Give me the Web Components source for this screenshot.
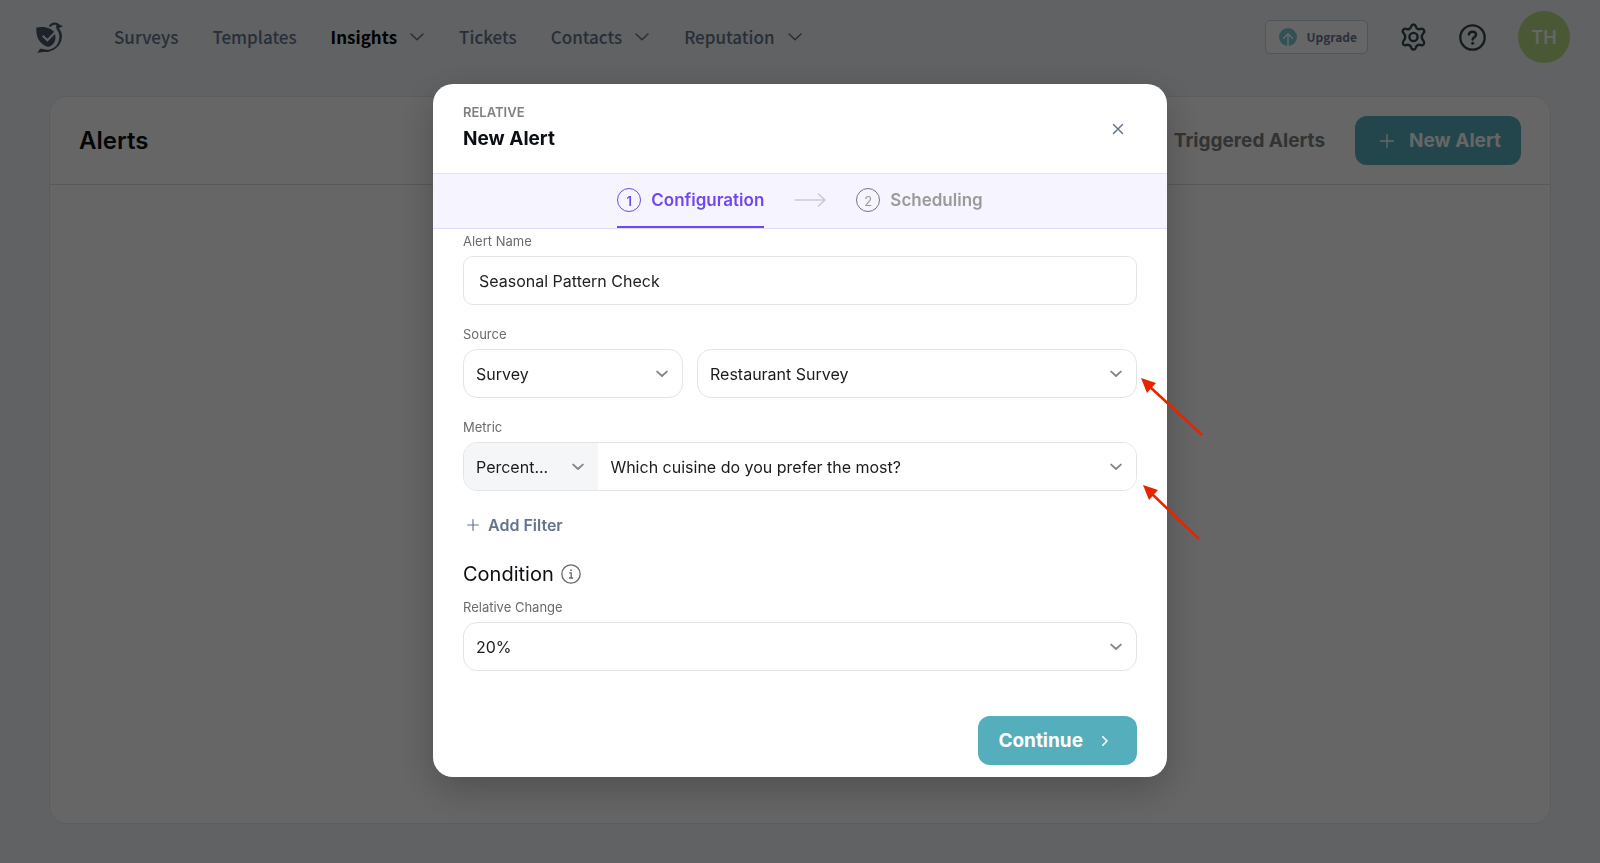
<!DOCTYPE html>
<html lang="en">
<head>
<meta charset="utf-8">
<meta name="viewport" content="width=device-width, initial-scale=1">
<title>Alerts</title>
<style>
  html, body { height: 100%; margin: 0; }
  body {
    background: #f1f5f9;
    color: #0b0f14;
    font-family: Inter, "Liberation Sans", sans-serif;
    font-size: 16px;
    --teal: #55aebb;
    --line: #e2e4e6;
    --violet: #7048f0;
    --slate: #64748b;
  }
</style>
</head>
<body>
<app-page>
  <top-nav slot="nav">
    <nav-item>Surveys</nav-item>
    <nav-item>Templates</nav-item>
    <nav-item menu current>Insights</nav-item>
    <nav-item>Tickets</nav-item>
    <nav-item menu>Contacts</nav-item>
    <nav-item menu>Reputation</nav-item>
  </top-nav>
  <page-card>
    <span slot="title">Alerts</span>
    <text-link slot="actions">Triggered Alerts</text-link>
    <app-button slot="actions" icon="plus">New Alert</app-button>
  </page-card>
  <alert-modal slot="modal"></alert-modal>
</app-page>

<script>
const icons = {
  plus: `<svg width="24" height="24" viewBox="0 0 24 24" fill="none" stroke="currentColor" stroke-width="1.4" stroke-linecap="round" aria-hidden="true"><path d="M12 5.5v13M5.5 12h13"/></svg>`,
  next: `<svg width="24" height="24" viewBox="0 0 24 24" fill="none" stroke="currentColor" stroke-width="1.6" stroke-linecap="round" stroke-linejoin="round" aria-hidden="true"><path d="M9.8 7.8 14 12l-4.2 4.2"/></svg>`,
  chevron: `<svg width="12" height="8" viewBox="0 0 12 8" fill="none" stroke="#868686" stroke-width="1.9" stroke-linecap="round" stroke-linejoin="round" aria-hidden="true"><path d="M1.2 1.6 6 6l4.800-4.400"/></svg>`,
};

function define(name, render) {
  customElements.define(name, class extends HTMLElement {
    constructor() {
      super();
      this.attachShadow({ mode: 'open' });
    }
    connectedCallback() {
      if (this.shadowRoot.childNodes.length) return;
      const t = document.createElement('template');
      t.innerHTML = `<style>*{box-sizing:border-box}</style>` + render(this);
      this.shadowRoot.append(t.content.cloneNode(true));
    }
  });
}

define('app-page', () => `
  <style>
    :host { display: flex; flex-direction: column; min-height: 100vh; box-sizing: border-box; padding-bottom: 39px; }
    main { flex: 1; display: flex; padding: 0 49px; }
    ::slotted(page-card) { flex: 1; }
  </style>
  <slot name="nav"></slot>
  <main><slot></slot></main>
  <slot name="modal"></slot>`);

define('top-nav', () => `
  <style>
    :host { display: flex; align-items: center; height: 74px; margin-bottom: 22px; padding: 0 30px 0 36px;
      font-family: "Noto Sans CJK SC", "Noto Sans", sans-serif; box-sizing: border-box; }
    .logo { display: block; width: 27px; height: 31px; margin-right: 51px; color: #475569; }
    svg { display: block; }
    nav { display: flex; align-items: center; gap: 34px; }
    .tools { display: flex; align-items: center; gap: 32px; margin-left: auto; }
    button { font: inherit; border: 0; background: none; padding: 0; color: #33484d; }
    .upgrade { display: flex; align-items: center; gap: 9px; height: 34px; padding: 0 10px 0 13px;
      border: 1px solid #cbd2e0; border-radius: 5px; background: #fff; color: #6b7699; font-size: 12px; font-weight: 700; line-height: 20px; }
    .avatar { width: 52px; height: 52px; border-radius: 50%; background: #badb88; color: #fff; font: 600 18px Inter, sans-serif; }
  </style>
  <a class="logo" href="#" aria-label="Home">
    <svg width="27" height="31" viewBox="0 0 78 90" fill="none">
      <path fill="currentColor" d="M1 16C20 12 43 16 53 30 61 48 54 64 38 72 16 70-2 48 1 16Z"/>
      <path stroke="#f1f5f9" stroke-width="6" d="m19 40 14 13 26-27"/>
      <path stroke="currentColor" stroke-width="6" d="M39 13C46 3 59 2 66 10"/>
      <path fill="currentColor" d="M61 4 78 12 66 18C76 29 77 42 73 55 66 75 44 89 21 87L3 89C10 85 8 77 16 78 38 85 58 76 65 57 70 44 68 31 60 22L58 13Z"/>
    </svg>
  </a>
  <nav aria-label="Main"><slot></slot></nav>
  <div class="tools">
    <button class="upgrade" type="button">
      <svg width="18" height="18" viewBox="0 0 18 18" aria-hidden="true"><circle cx="9" cy="9" r="9" fill="#78cdd3"/><path d="M9 17.5V6.4M4.6 10.2 9 5.8l4.4 4.4" fill="none" stroke="#fff" stroke-width="1.6" stroke-linecap="round" stroke-linejoin="round"/></svg>
      Upgrade
    </button>
    <button type="button" aria-label="Settings">
      <svg width="27" height="28" viewBox="0 0 27 28" fill="none" stroke="currentColor" stroke-width="2.4" stroke-linejoin="round"><path d="M11.3 3.2C12 .9 15 .9 15.7 3.2 16.4 5.700 18.700 6.800 21 5.900 23.600 5.200 25.300 8 23.500 10 21.300 12.500 21.300 15.500 23.500 18 25.300 20 23.600 22.800 21 22.100 18.700 21.200 16.400 22.300 15.700 24.800 15 27.100 12 27.100 11.300 24.800 10.600 22.300 8.300 21.200 6 22.100 3.400 22.800 1.700 20 3.500 18 5.700 15.500 5.700 12.500 3.500 10 1.700 8 3.400 5.200 6 5.900 8.300 6.800 10.600 5.700 11.300 3.200Z"/><circle cx="13.500" cy="14" r="4.100"/></svg>
    </button>
    <button type="button" aria-label="Help">
      <svg width="27" height="27" viewBox="0 0 27 27" fill="none" stroke="currentColor" stroke-width="2.3" stroke-linecap="round"><circle cx="13.5" cy="13.5" r="12.2"/><path stroke-width="2.5" d="M9.900 10.400C10.500 6.500 17.100 6.900 17 10.700 17 13 14 13.200 13.700 15.400"/><circle cx="13.6" cy="19.3" r="1.5" fill="currentColor" stroke="none"/></svg>
    </button>
    <button class="avatar" type="button" aria-label="Account">TH</button>
  </div>`);

define('nav-item', el => `
  <style>
    :host { display: block; }
    a { display: flex; align-items: center; gap: 12px; color: var(--slate); font-size: 17px; font-weight: 500; line-height: 24px; text-decoration: none; }
    :host([current]) a { color: #000; font-weight: 700; }
    svg { display: block; }
  </style>
  <a href="#"><slot></slot>${el.hasAttribute('menu') ? `<svg width="16" height="10" viewBox="0 0 16 10" fill="none" stroke="#64748b" stroke-width="1.5" stroke-linecap="round" stroke-linejoin="round" aria-hidden="true"><path d="M2 2l6 5.800L14 2"/></svg>` : ''}</a>`);

define('page-card', () => `
  <style>
    :host { display: block; background: #fff; border: 1px solid #e2e8f0; border-radius: 18px; }
    header { display: flex; align-items: center; gap: 30px; min-height: 88px; padding: 0 29px; border-bottom: 1px solid #d9dde1; }
    h1 { margin: 0 auto 0 0; font-size: 24px; line-height: 32px; font-weight: 600; }
  </style>
  <header><h1><slot name="title"></slot></h1><slot name="actions"></slot></header>
  <slot></slot>`);

define('text-link', () => `
  <style>
    :host { display: block; }
    a { color: #808080; font-size: 19px; line-height: 24px; font-weight: 700; text-decoration: none; white-space: nowrap; }
  </style>
  <a href="#"><slot></slot></a>`);

define('app-button', el => {
  const icon = icons[el.getAttribute('icon')];
  const label = '<span><slot></slot></span>';
  return `
  <style>
    :host { display: block; }
    button { display: flex; align-items: center; gap: 10px; height: 49px; padding: 0 20px; border: 0; border-radius: 12px;
      background: var(--teal); color: #fff; font: inherit; font-size: 19px; font-weight: 700; line-height: 24px; white-space: nowrap; }
    svg { display: block; }
  </style>
  <button type="button">${el.getAttribute('icon') === 'next' ? label + icon : icon + label}</button>`;
});

define('step-item', el => `
  <style>
    :host { display: flex; align-items: center; gap: 10px; border-bottom: 2px solid transparent; color: #9a9a9a; font-size: 17px; line-height: 24px; font-weight: 600; }
    :host([active]) { border-color: var(--violet); color: var(--violet); }
    .num { display: grid; place-items: center; width: 24px; height: 24px; border: 1px solid #777; border-radius: 50%; font-size: 13px; font-weight: 400; }
    :host([active]) .num { border-color: currentColor; font-weight: 600; }
  </style>
  <span class="num">${el.getAttribute('number')}</span><slot></slot>`);

define('pointer-arrow', el => `
  <style>
    :host { display: block; position: absolute; left: 100%; pointer-events: none; }
    svg { display: block; }
  </style>
  <svg width="70" height="64" viewBox="0 0 70 64" aria-hidden="true">${el.hasAttribute('short')
    ? '<path d="m14 10 48 46" stroke="#e62400" stroke-width="2.5"/><path d="M6 2 21 7 12 17Z" fill="#e62400"/>'
    : '<path d="m12 10 53 49" stroke="#e62400" stroke-width="2.5"/><path d="M4 2 19 7 10 17Z" fill="#e62400"/>'}</svg>`);

const labelStyle = `label { display: block; margin-bottom: 5px; color: #6b6b6b; font-size: 13px; line-height: 20px; }`;

define('text-field', el => `
  <style>
    :host { display: block; }
    ${labelStyle}
    input { display: block; width: 100%; height: 49px; padding: 0 15px; border: 1px solid var(--line); border-radius: 10px; background: #fff;
      color: #222; font: inherit; font-size: 16px; outline: 0; }
  </style>
  <label for="control">${el.getAttribute('label')}</label>
  <input id="control" type="text" value="${el.getAttribute('value')}">`);

const selectBox = (id, text, aria) => `
  <span class="box"><select id="${id}"${aria ? ` aria-label="${aria}"` : ''}><option>${text}</option></select>${icons.chevron}</span>`;

define('select-field', el => {
  const values = el.getAttribute('values').split('|');
  return `
  <style>
    :host { display: block; position: relative; }
    ${labelStyle}
    .row { display: grid; gap: 14px; }
    .two { grid-template-columns: 1fr 2fr; }
    .box { display: grid; align-items: center; height: 49px; border: 1px solid var(--line); border-radius: 14px; background: #fff; min-width: 0; }
    select { grid-area: 1 / 1; width: 100%; height: 100%; padding: 0 32px 0 12px; border: 0; border-radius: inherit; background: none; appearance: none;
      color: #1b1b1b; font: inherit; font-size: 16px; outline: 0; }
    svg { grid-area: 1 / 1; justify-self: end; margin-right: 14px; pointer-events: none; }
    :host([joined]) .row { grid-template-columns: 1fr 4fr; gap: 0; border: 1px solid var(--line); border-radius: 14px; overflow: hidden; }
    :host([joined]) .box { height: 47px; border: 0; border-radius: 0; }
    :host([joined]) .box:first-child { background: #f5f6f8; }
  </style>
  <label for="control">${el.getAttribute('label')}</label>
  <div class="row ${values.length > 1 ? 'two' : ''}">
    ${values.map((v, i) => selectBox(i ? 'control' + i : 'control', v, i ? el.getAttribute('second-label') : '')).join('')}
  </div>
  <slot></slot>`;
});

define('alert-modal', () => `
  <style>
    :host { position: fixed; inset: 0; display: flex; align-items: flex-start; justify-content: center; padding: 84px 24px 24px; background: rgba(0,0,0,.6); box-sizing: border-box; }
    section { width: 100%; max-width: 734px; border-radius: 20px; background: #fff; box-shadow: 0 12px 40px rgba(0,0,0,.24); }
    header { display: flex; align-items: center; justify-content: space-between; padding: 0 37px 0 30px; border-bottom: 1px solid var(--line); }
    .heading { padding: 18px 0 22px; }
    p, h2, h3 { margin: 0; }
    p { margin-bottom: 5px; color: #808080; font-size: 13px; line-height: 20px; font-weight: 600; }
    h2 { font-size: 19px; line-height: 24px; font-weight: 700; }
    button { font: inherit; border: 0; background: none; color: var(--slate); }
    svg { display: block; }
    .close { padding: 4px; }
    .steps { display: flex; justify-content: center; gap: 30px; height: 55px; background: #f6f4fe; border-bottom: 1px solid #e2dcfb; }
    .arrow { padding-bottom: 2px; align-self: center; }
    form { display: flex; flex-direction: column; gap: 19px; padding: 2px 30px 20px; }
    .filter { display: flex; align-items: center; gap: 9px; align-self: flex-start; height: 30px; padding: 0 4px; font-size: 16px; font-weight: 600; }
    h3 { display: flex; align-items: center; gap: 7px; margin-bottom: 8px; font-size: 20px; line-height: 30px; font-weight: 400; }
    footer { display: flex; justify-content: flex-end; padding: 25px 30px 12px; }
    pointer-arrow { top: 52px; }
    pointer-arrow[short] { top: 66px; }
  </style>
  <section role="dialog" aria-modal="true" aria-labelledby="title">
    <header>
      <div class="heading"><p>RELATIVE</p><h2 id="title">New Alert</h2></div>
      <button class="close" type="button" aria-label="Close"><svg width="16" height="16" viewBox="0 0 16 16" fill="none" stroke="currentColor" stroke-width="1.5" stroke-linecap="round"><path d="m3.5 3.5 9 9M12.5 3.5l-9 9"/></svg></button>
    </header>
    <div class="steps">
      <step-item number="1" active>Configuration</step-item>
      <span class="arrow"><svg width="32" height="16" viewBox="0 0 32 16" fill="none" stroke="#cbc9d1" stroke-width="1.6" stroke-linecap="round" stroke-linejoin="round" aria-hidden="true"><path d="M1 8h30M24.5 2 31 8l-6.500 6"/></svg></span>
      <step-item number="2">Scheduling</step-item>
    </div>
    <form>
      <text-field label="Alert Name" value="Seasonal Pattern Check"></text-field>
      <select-field label="Source" second-label="Survey name" values="Survey|Restaurant Survey"><pointer-arrow></pointer-arrow></select-field>
      <select-field label="Metric" second-label="Question" values="Percent...|Which cuisine do you prefer the most?" joined><pointer-arrow short></pointer-arrow></select-field>
      <button class="filter" type="button"><svg width="12" height="12" viewBox="0 0 12 12" fill="none" stroke="currentColor" stroke-width="1.2" stroke-linecap="round" aria-hidden="true"><path d="M6 .7v10.600M.7 6h10.600"/></svg>Add Filter</button>
      <div>
        <h3>Condition <svg width="20" height="20" viewBox="0 0 20 20" fill="none" stroke="#666" stroke-width="1.3" aria-hidden="true"><circle cx="10" cy="10" r="9.2"/><path d="M8.300 8.800h1.900v5M8 14h4.200"/><circle cx="10" cy="6.2" r=".9" fill="#666" stroke="none"/></svg></h3>
        <select-field label="Relative Change" values="20%"></select-field>
      </div>
    </form>
    <footer><app-button icon="next">Continue</app-button></footer>
  </section>`);
</script>
</body>
</html>
